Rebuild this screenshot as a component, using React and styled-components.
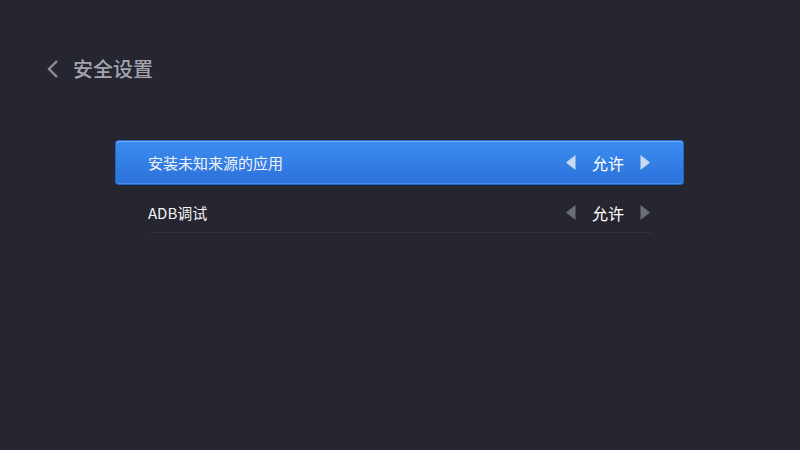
import React from 'react';
import styled, { createGlobalStyle } from 'styled-components';

const GlobalStyle = createGlobalStyle`
  html, body {
    margin: 0;
    padding: 0;
    background: #252630;
  }
  body {
    font-family: "Noto Sans CJK SC", "Noto Sans", sans-serif;
  }
`;

const Screen = styled.div`
  width: 800px;
  height: 450px;
  background: #252630;
  box-sizing: border-box;
  padding: 54px 0 0 0;
  overflow: hidden;
`;

const Header = styled.div`
  display: flex;
  align-items: center;
  gap: 14px;
  padding-left: 45px;
  height: 30px;
`;

const Title = styled.h1`
  margin: 0;
  font-size: 20px;
  font-weight: 500;
  color: #a3a5ae;
  line-height: 30px;
`;

const List = styled.div`
  display: flex;
  flex-direction: column;
  margin: 57px 0 0 116px;
  width: 567px;
`;

const Row = styled.div`
  display: flex;
  align-items: center;
  justify-content: space-between;
  box-sizing: border-box;
  border-radius: 3px;
  color: #f2f3f6;
  font-size: 15px;
  ${p =>
    p.$active
      ? `
    height: 43px;
    padding: 0 33px 0 32px;
    background: linear-gradient(#3b8df2, #2c71da);
    box-shadow: inset 0 1px 0 rgba(150, 200, 255, 0.65),
      inset 0 -1px 0 rgba(110, 170, 255, 0.5), 0 0 0 1px #2466c8;
  `
      : `
    height: 49px;
    margin: 0 30px 0 32px;
    padding: 9px 3px 0 0;
    border-bottom: 1px solid #30323c;
  `}
`;

const Label = styled.span``;

const Switcher = styled.div`
  display: flex;
  align-items: center;
  gap: 16px;
  font-size: 16px;
  color: #ffffff;
`;

const Arrow = ({ dir, color }) => (
  <svg width="10" height="15" viewBox="0 0 10 15">
    {dir === 'left' ? (
      <polygon points="9.5,0 9.5,15 0,7.5" fill={color} />
    ) : (
      <polygon points="0.5,0 0.5,15 10,7.5" fill={color} />
    )}
  </svg>
);

const Back = () => (
  <svg width="14" height="20" viewBox="0 0 14 20">
    <polyline points="12,2 4,10 12,18" fill="none" stroke="#8d8f98" strokeWidth="2.4" />
  </svg>
);

const settings = [
  { label: '安装未知来源的应用', value: '允许', active: true },
  { label: 'ADB调试', value: '允许', active: false },
];

export default function App() {
  return (
    <Screen>
      <GlobalStyle />
      <Header>
        <Back />
        <Title>安全设置</Title>
      </Header>
      <List>
        {settings.map(s => (
          <Row key={s.label} $active={s.active}>
            <Label>{s.label}</Label>
            <Switcher>
              <Arrow dir="left" color={s.active ? '#c9d9f2' : '#6a6c76'} />
              <span>{s.value}</span>
              <Arrow dir="right" color={s.active ? '#c9d9f2' : '#6a6c76'} />
            </Switcher>
          </Row>
        ))}
      </List>
    </Screen>
  );
}
